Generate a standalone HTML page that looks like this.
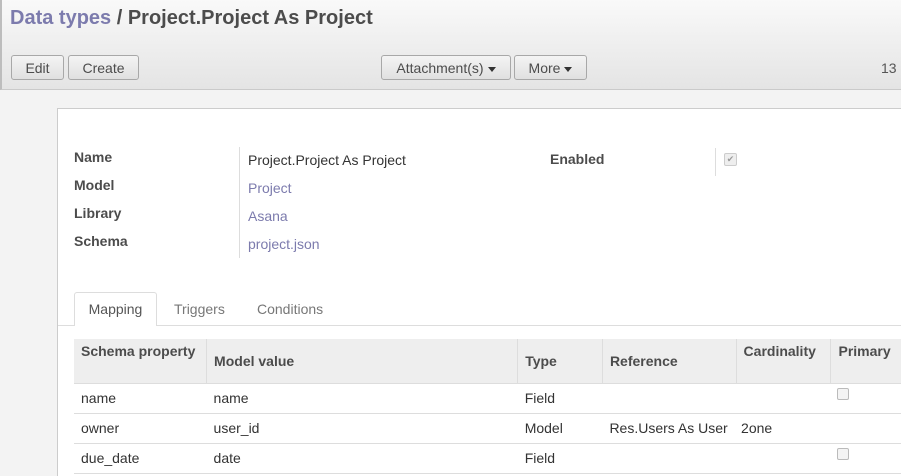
<!DOCTYPE html>
<html style="overflow:hidden"><head><style>
body{margin:0;width:901px;height:476px;overflow:hidden;font-family:"Liberation Sans",sans-serif;font-size:14px;color:#333;background:#f3f3f3;position:relative}
.hdr{position:absolute;left:0;top:0;width:901px;height:90px;background:linear-gradient(#f9f9f9,#e4e4e4);border-bottom:1px solid #cacaca;border-left:2px solid #bdbdbd;box-sizing:border-box}
.t{position:absolute;left:8px;top:7px;font-size:20px;font-weight:bold;color:#4c4c4c}
.t span{color:#7c7bad}
.b{position:absolute;top:55px;height:25px;box-sizing:border-box;border:1px solid #a8a8a8;border-radius:3px;background:linear-gradient(#f4f4f4,#e0e0e0);font-size:14px;line-height:24px;text-align:center;color:#4c4c4c}
.c{display:inline-block;width:0;height:0;border-left:4px solid transparent;border-right:4px solid transparent;border-top:5px solid #333;vertical-align:middle;margin-left:4px}
.sheet{position:absolute;left:57px;top:108px;width:850px;height:380px;background:#fff;border:1px solid #ccc;box-sizing:border-box}
.l{position:absolute;font-weight:bold;color:#4c4c4c}
.v{position:absolute;color:#333}
.a{color:#7c7bad}
.sep{position:absolute;width:1px;background:#ddd}
table{position:absolute;left:74px;top:339px;border-collapse:collapse}
th{background:#eee;text-align:left;font-weight:bold;color:#4c4c4c;padding:0 7px;height:44px;border-left:1px solid #ddd;box-sizing:border-box}
th:first-child{border-left:none}
td{height:30px;border-top:1px solid #ddd;padding:0 7px;box-sizing:border-box;position:relative}
tr:last-child td{border-bottom:1px solid #ddd}
.cb{position:absolute;left:6px;top:4px;width:10px;height:10px;border:1px solid #bbb;border-radius:2px;background:#f4f4f4}
</style></head><body>
<div class="hdr"><div class="t"><span>Data types</span> / Project.Project As Project</div></div>
<div class="b" style="left:11px;width:53px">Edit</div>
<div class="b" style="left:68px;width:71px">Create</div>
<div class="b" style="left:381px;width:130px">Attachment(s)<i class="c"></i></div>
<div class="b" style="left:514px;width:73px">More<i class="c"></i></div>
<div style="position:absolute;left:881px;top:60px;color:#555">13</div>
<div class="sheet"></div>
<div class="l" style="left:74px;top:149px">Name</div>
<div class="l" style="left:74px;top:177px">Model</div>
<div class="l" style="left:74px;top:205px">Library</div>
<div class="l" style="left:74px;top:233px">Schema</div>
<div class="sep" style="left:239px;top:147px;height:111px"></div>
<div class="v" style="left:248px;top:152px">Project.Project As Project</div>
<div class="v a" style="left:248px;top:180px">Project</div>
<div class="v a" style="left:248px;top:208px">Asana</div>
<div class="v a" style="left:248px;top:236px">project.json</div>
<div class="l" style="left:550px;top:151px">Enabled</div>
<div class="sep" style="left:715px;top:148px;height:28px"></div>
<div style="position:absolute;left:724px;top:153px;width:11px;height:11px;border:1px solid #ccc;border-radius:2px;background:#eee;font-size:9px;line-height:11px;text-align:center;color:#999">✔</div>
<div style="position:absolute;left:58px;top:325px;width:843px;height:1px;background:#ddd"></div>
<div style="position:absolute;left:74px;top:292px;width:83px;height:34px;background:#fff;border:1px solid #ddd;border-bottom:none;border-radius:3px 3px 0 0;box-sizing:border-box;text-align:center;line-height:33px;color:#555">Mapping</div>
<div style="position:absolute;left:174px;top:301px;color:#777">Triggers</div>
<div style="position:absolute;left:257px;top:301px;color:#777">Conditions</div>
<table>
<tr><th style="width:133px;vertical-align:top;padding-top:4px">Schema property</th><th style="width:313px">Model value</th><th style="width:85px">Type</th><th style="width:134px">Reference</th><th style="width:95px;vertical-align:top;padding-top:4px">Cardinality</th><th style="width:70px;vertical-align:top;padding-top:4px">Primary</th></tr>
<tr><td>name</td><td>name</td><td>Field</td><td></td><td></td><td><span class="cb"></span></td></tr>
<tr><td>owner</td><td>user_id</td><td>Model</td><td>Res.Users As User</td><td style="padding-left:5px">2one</td><td></td></tr>
<tr><td>due_date</td><td>date</td><td>Field</td><td></td><td></td><td><span class="cb"></span></td></tr>
</table>
</body></html>
